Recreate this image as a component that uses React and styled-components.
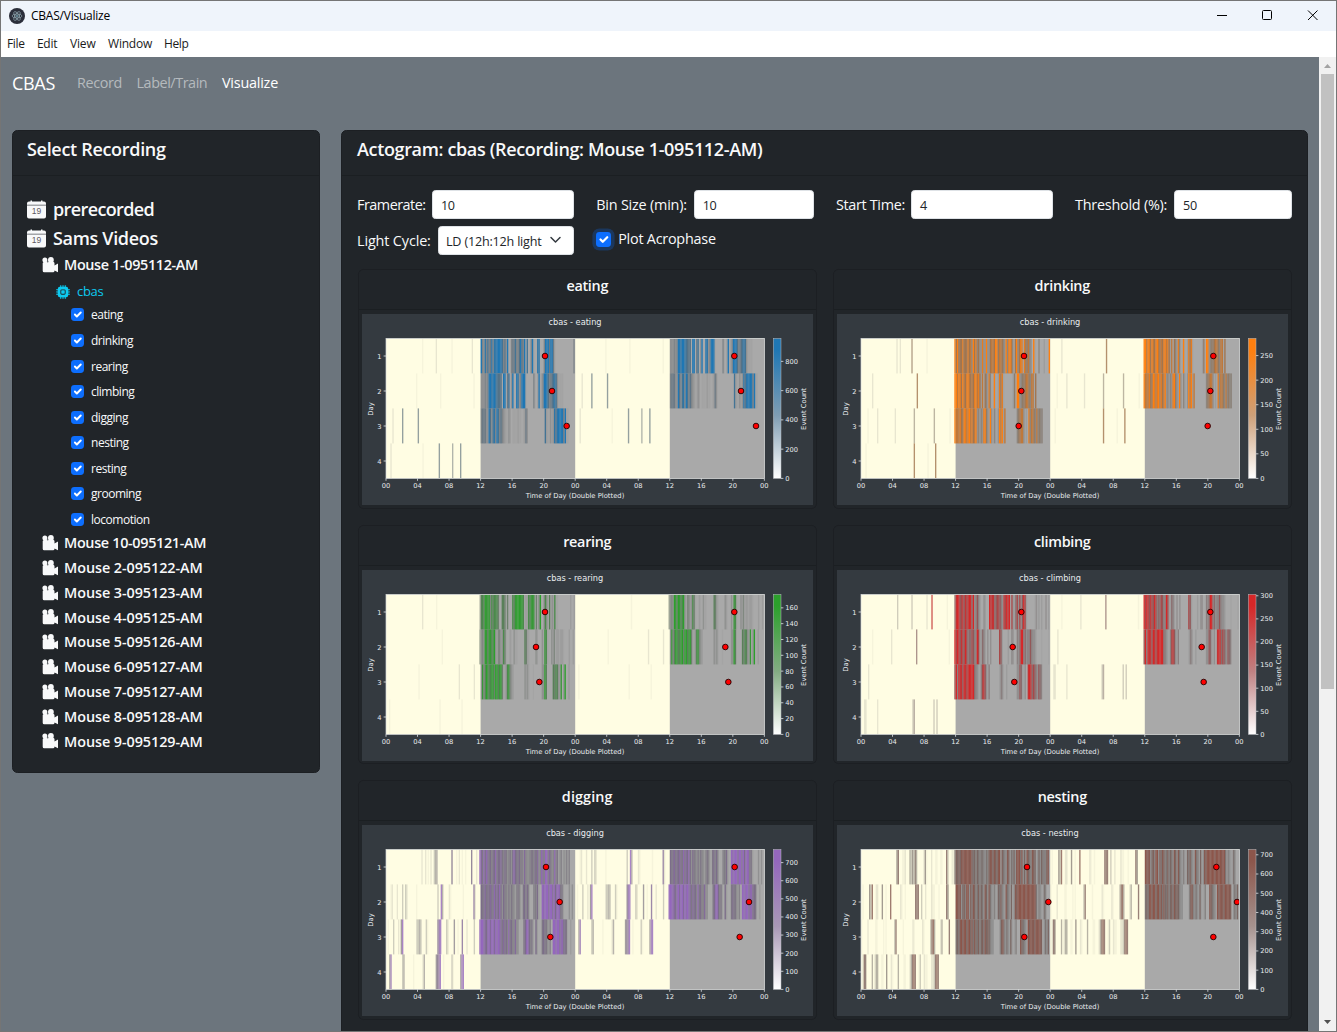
import React from "react";
import styled, { createGlobalStyle } from "styled-components";
import { BsCpuFill } from "react-icons/bs";

const Global = createGlobalStyle`
  *, *::before, *::after { box-sizing: border-box; }
  html, body { margin: 0; padding: 0; overflow: hidden; }
  body { font-family: "Open Sans", "Noto Sans", sans-serif; font-size: 14.4px; line-height: 1.5; color: #f8f9fa; }
`;

const Window = styled.div`
  width: 1337px;
  height: 1032px;
  display: flex;
  flex-direction: column;
  border: 1px solid #757575;
  background: #6c757d;
  overflow: hidden;
`;

const TitleBar = styled.header`
  flex: 0 0 30px;
  display: flex;
  align-items: center;
  background: #eff4fb;
  color: #000;
  padding-left: 8px;
`;

const Text = styled.span`
  display: inline-block;
  white-space: nowrap;
  font-size: ${(p) => p.$size || 14.4}px;
  font-weight: ${(p) => p.$weight || 400};
  letter-spacing: ${(p) => p.$track || 0}px;
`;

const WindowTitle = styled.div`
  margin-left: 6px;
  flex: 1;
  line-height: 16px;
  padding-bottom: 1px;
`;

const WindowButtons = styled.div`
  display: flex;
  padding-right: 4px;
  svg { display: block; width: 46px; height: 30px; }
`;

const MenuBar = styled.nav`
  flex: 0 0 26px;
  display: flex;
  align-items: center;
  background: #fff;
  color: #1b1b1b;
  padding: 0 0 2px 6px;
`;

const MenuItem = styled.div`
  width: ${(p) => p.$w}px;
`;

const Viewport = styled.div`
  flex: 1;
  min-height: 0;
  display: flex;
`;

const Page = styled.div`
  flex: 1;
  min-width: 0;
  overflow: hidden;
`;

const Navbar = styled.nav`
  height: 73px;
  display: flex;
  padding: 10px 0 0 11px;
`;

const NavItem = styled.div`
  width: ${(p) => p.$w}px;
  height: 32px;
  display: flex;
  align-items: center;
  color: ${(p) => (p.$active ? "#fff" : "#b5babe")};
`;

const Columns = styled.main`
  display: flex;
  align-items: flex-start;
  gap: 21px;
  padding-left: 11px;
`;

const Card = styled.section`
  width: ${(p) => p.$w}px;
  height: ${(p) => p.$h}px;
  flex: none;
  background: #212529;
  border: 1px solid #1c1f23;
  border-radius: 5.4px;
`;

const CardHeader = styled.div`
  height: 45px;
  padding: 5px 0 0 ${(p) => p.$pad || 15}px;
  border-bottom: 1px solid #1b1f22;
`;

const Tree = styled.div`
  padding: 19px 0 0 14px;
`;

const TreeRow = styled.div`
  height: ${(p) => p.$h}px;
  padding-left: ${(p) => p.$indent || 0}px;
  display: flex;
  align-items: center;
  gap: ${(p) => p.$gap || 7}px;
  color: ${(p) => p.$color || "#f8f9fa"};
  svg { flex: none; display: block; }
`;

const ModelRow = styled(TreeRow)`
  padding-top: 5px;
`;

const CheckGroup = styled.div`
  height: 228.4px;
  ${Text} { padding-top: 1px; }
`;

const Box = styled.span`
  flex: none;
  width: ${(p) => p.$s}px;
  height: ${(p) => p.$s}px;
  border-radius: 3.4px;
  background: #0d6efd;
  box-shadow: ${(p) => (p.$focus ? "0 0 0 3.6px rgba(13,110,253,.25)" : "none")};
  display: flex;
  svg { width: 100%; height: 100%; }
`;

const Controls = styled.div`
  display: grid;
  grid-template-columns: 217px 217.5px 217px 217px;
  column-gap: 22.2px;
  row-gap: 7px;
  padding: 14px 15px 0;
`;

const Field = styled.label`
  display: flex;
  align-items: center;
  justify-content: space-between;
  height: 29px;
`;

const CheckField = styled.label`
  display: flex;
  align-items: center;
  gap: 7px;
  height: 26px;
`;

const Input = styled.span`
  width: ${(p) => p.$w}px;
  height: 29px;
  padding: 3px 8px 0;
  display: flex;
  align-items: center;
  justify-content: space-between;
  background: #fff;
  border: 1px solid #dee2e6;
  border-radius: 3.6px;
  color: #212529;
`;

const Select = styled(Input)`
  padding: 3px 8px 0 7px;
  svg { margin-top: -2px; }
`;

const Charts = styled.div`
  display: grid;
  grid-template-columns: repeat(2, 459.5px);
  column-gap: 15.5px;
  row-gap: 16px;
  padding: 14px 0 0 15.5px;
`;

const ChartCard = styled.article`
  height: 239.6px;
  border: 1px solid #1c1f23;
  border-radius: 5.4px;
`;

const ChartHeader = styled.div`
  height: 40px;
  padding-top: 5px;
  text-align: center;
  border-bottom: 1px solid #1b1f22;
`;

const ChartBody = styled.div`
  padding: 4px 0 0 3.6px;
  svg { display: block; }
`;

const ScrollTrack = styled.div`
  flex: 0 0 17px;
  display: flex;
  flex-direction: column;
  align-items: center;
  justify-content: space-between;
  background: #f1f1f1;
  svg { display: block; flex: none; }
`;

const Thumb = styled.div`
  width: 13px;
  height: 615px;
  margin-bottom: auto;
  background: #c1c1c1;
`;

const Check = () => (
  <svg viewBox="0 0 20 20">
    <path fill="none" stroke="#fff" strokeLinecap="round" strokeLinejoin="round" strokeWidth="3" d="m6 10 3 3 6-6" />
  </svg>
);

const CalendarIcon = () => (
  <svg width="19" height="19" viewBox="0 0 19 19">
    <path d="M2 1.500h1.500V.5h1.500v1h9V.5h1.500v1H17a2 2 0 0 1 2 2V16.500a2 2 0 0 1-2 2H2a2 2 0 0 1-2-2V3.500a2 2 0 0 1 2-2z" fill="#f8f9fa" />
    <path d="M0 4.500h19v1.500H0z" fill="#a3a5a8" />
    <text x="9.500" y="14.400" fontSize="8.500" fontFamily="Liberation Sans, sans-serif" textAnchor="middle" fill="#5f5a62">19</text>
  </svg>
);

const CameraIcon = () => (
  <svg width="16" height="16" viewBox="0 0 16 16" fill="#f8f9fa">
    <circle cx="2.900" cy="2.900" r="2.500" />
    <circle cx="8.900" cy="2.900" r="2.900" />
    <path d="M1.800 4.800h9.200a1.500 1.500 0 0 1 1.500 1.500v2.200L16 6.500v8.700l-3.500-1.700v.3a1.500 1.500 0 0 1-1.500 1.500H2.200a1.500 1.500 0 0 1-1.500-1.500V6z" />
    <circle cx="5.700" cy="4.900" r="0.600" fill="#6d7175" />
  </svg>
);

/* Each token is "start:levels"; every digit is the level of one ten minute bin. */
const BEHAVIORS = [
  { name: "eating", rgb: [31, 119, 180], max: 957, step: 200, marks: [[570, 1138], [591, 1158], [635, 1203]], days: [
    "201:1 242:2 289:1 350:2 377:943847458488999974639004557446964907004910088000499959951 655:4",
    "183:1 255:1 355:1 377:333434998998766609905703900983499910000041029124999645678731111",
    "112:2 141:5 188:5 377:455533963784974643211320111121101253 569:7211313 597:86899995 629:911",
    "106:2 202:1 251:5 291:4 315:5"] },
  { name: "drinking", rgb: [255, 127, 14], max: 285, step: 50, marks: [[582, 1150], [574, 1141], [566, 1133]], days: [
    "199:2 209:2 244:5 289:1 373:969666866686749684633833933677699577643948974069468818657430910040002 656:9",
    "126:2 260:6 373:997986976897676897862706428401910286810 548:25 560:993455677547716",
    "112:1 141:2 194:2 251:4 311:4 358:1 373:977786698789786793424389532930420397927 560:45677312 595:84775474544",
    "106:1 251:6 292:1 315:6"] },
  { name: "rearing", rgb: [44, 160, 44], max: 177, step: 20, marks: [[570, 1138], [543, 1111], [553, 1120]], days: [
    "201:2 243:1 373:367698894767775006650500076899989712176888150490047306132711 645:2 656:2",
    "260:1 373:434398698779314423751002103110 508:6521 541:32 560:318710 588:3241221221 641:2 653:2",
    "190:1 311:2 356:2 377:384698678959968951137843 472:2 508:3231 533:1 560:3396 593:65763280390 640:2",
    "102:1 253:1 319:1"] },
  { name: "climbing", rgb: [214, 39, 40], max: 303, step: 50, marks: [[574, 1141], [548, 1115], [553, 1121]], days: [
    "201:3 244:3 289:2 304:8 350:1 373:58996786878995934642 460:32 477:988856776438798917225737369720 613:1312 633:2 646:3 654:2",
    "126:1 183:2 258:5 356:1 373:979868769745576449722542030 480:3 507:762 533:2 543:33 560:435994534464332 633:1 654:1",
    "114:2 373:694988698789999543204786314 508:243 528:2 560:3365213 593:89857643654",
    "102:22 141:2 247:34 310:3 319:3"] },
  { name: "digging", rgb: [148, 103, 189], max: 773, step: 100, marks: [[573, 1139], [614, 1182], [586, 1154]], days: [
    "199:2 210:2 218:1 226:2 236:344 289:6 303:1 311:2 320:1 330:1 348:6 363:2 373:975868756466856675465345368655645374334554657348749947534845134132424",
    "106:12 125:2 141:3 150:32 183:1 247:3 257:94 281:21 323:1 355:72 377:656756676586768636543535432454205646400044 541:462 560:98999799796898552 641:3 650:3",
    "98:1 114:3 129:2 137:59 184:3343 212:31 247:689 273:32 296:5 307:1 320:7 334:2 356:3 373:999876897997989875766485644733 505:568964520 541:62 560:5655324 593:99899788665 645:2",
    "102:48 141:34 174:1 202:24 242:5679 264:1 289:31 315:489"] },
  { name: "nesting", rgb: [140, 86, 75], max: 728, step: 100, marks: [[591, 1159], [655, 1221], [583, 1150]], days: [
    "199:57 216:112 238:435364 280:251 303:2 315:11 330:11 348:73 363:12 373:576768898998975646545543547886876892754387254638995836396548762363654478",
    "97:1 117:538 137:22 155:5 166:1 180:8 210:21 224:1 255:777 273:3 285:2 303:211 325:1 348:75 377:988836749937587457465386385324216574328542613879999998999989952432154",
    "93:1 112:2 135:11 159:1 166:1 192:37 218:1 247:21 276:21 300:3784 330:24 356:7 377:56589799689685865746758676433 509:4784353262124 570:87543 593:97988798987 641:3536",
    "97:276 125:4 133:244 153:11 168:5 182:21 203:4 220:11 238:24787 265:13 281:211 303:223787"] },
];

const MIX = [0, 0, 0, 0.04, 0.1, 0.2, 0.34, 0.55, 0.82, 1];
const ALPHA = [0, 0.08, 0.2, 0.42, 0.64, 0.84, 1, 1, 1, 1];

/* Daytime bins sit on the pale band and blend into it more softly. */
const cellStyle = (rgb, level, day) => {
  const c = rgb.map((v) => Math.round(112 + (v - 112) * MIX[level]));
  return { fill: `rgb(${c.join(",")})`, fillOpacity: ALPHA[level] * (day ? 0.8 : 1) };
};

const BIN = 1.3125;

function Stripes({ data, rgb, x, y, limit }) {
  return data.split(" ").flatMap((token) => {
    const [start, levels] = token.split(":");
    return levels.split("").map((d, i) => {
      const px = (Number(start) - 93) / 3 + i * BIN;
      if (!Number(d) || px >= limit) return null;
      return <rect key={start + "-" + i} x={x + px} y={y} width={BIN + 0.04} height={35} style={cellStyle(rgb, Number(d), px < 93)} />;
    });
  });
}

function Actogram({ item }) {
  const { name, rgb, max, step, marks, days } = item;
  const L = 24, T = 24.4, H = 140, half = 189.2;
  const color = `rgb(${rgb.join(",")})`;
  const middle = `rgb(${rgb.map((v) => Math.round(v * 0.35 + 178 * 0.65)).join(",")})`;
  const ticks = [];
  for (let v = 0; v <= max; v += step) ticks.push(v);
  const hours = ["00", "04", "08", "12", "16", "20", "00", "04", "08", "12", "16", "20", "00"];
  return (
    <svg width="451" height="191" viewBox="0 0 451 191" fontFamily="DejaVu Sans, sans-serif" fill="#e9ecef">
      <defs>
        <linearGradient id={"bar-" + name} x1="0" y1="0" x2="0" y2="1">
          <stop offset="0" stopColor={color} />
          <stop offset="0.08" stopColor={color} />
          <stop offset="0.55" stopColor={middle} />
          <stop offset="1" stopColor="#fff" />
        </linearGradient>
        <clipPath id={"plot-" + name}><rect x={L} y={T} width={378.4} height={H} /></clipPath>
      </defs>
      <rect width="451" height="191" fill="#343a40" />
      <text x="213" y="10.8" fontSize="8.2" textAnchor="middle">cbas - {name}</text>
      <rect x={L} y={T} width={378.4} height={H} fill="#fffde3" />
      <rect x={L + half / 2} y={T} width={half / 2} height={H} fill="#a9a9a9" />
      <rect x={L + half * 1.5} y={T} width={half / 2} height={H} fill="#a9a9a9" />
      <g clipPath={`url(#plot-${name})`}>
        {days.map((d, i) => (
          <g key={i}>
            <Stripes data={d} rgb={rgb} x={L} y={T + i * 35} limit={half} />
            {i > 0 && <Stripes data={d} rgb={rgb} x={L + half} y={T + (i - 1) * 35} limit={half} />}
          </g>
        ))}
        {marks.map((row, i) => row.map((m) => (
          <circle key={m} cx={(m - 21) / 3} cy={T + 17.6 + i * 35} r="2.8" fill="#f00" stroke="#200" strokeWidth="0.9" />
        )))}
      </g>
      <rect x={L} y={T} width={378.4} height={H} fill="none" stroke="#d5d7d9" strokeWidth="0.7" />
      {hours.map((h, i) => (
        <g key={i}>
          <path d={`M${L + i * 31.53} 164.4v2.4`} stroke="#dee2e6" strokeWidth="0.8" />
          <text x={L + i * 31.53} y="174" fontSize="6.7" textAnchor="middle">{h}</text>
        </g>
      ))}
      {[1, 2, 3, 4].map((d, i) => (
        <g key={d}>
          <path d={`M21.6 ${T + 17.6 + i * 35}h2.4`} stroke="#dee2e6" strokeWidth="0.8" />
          <text x="19.5" y={T + 20.1 + i * 35} fontSize="6.7" textAnchor="end">{d}</text>
        </g>
      ))}
      <text x="213" y="184.4" fontSize="6.8" textAnchor="middle">Time of Day (Double Plotted)</text>
      <text transform="translate(10.8 95) rotate(-90)" fontSize="6.8" textAnchor="middle">Day</text>
      <rect x="411.4" y={T} width="7.6" height={H} fill={`url(#bar-${name})`} stroke="#b9bcc0" strokeWidth="0.5" />
      {ticks.map((v) => {
        const y = T + H - (v / max) * H;
        return (
          <g key={v}>
            <path d={`M419 ${y}h2.4`} stroke="#dee2e6" strokeWidth="0.8" />
            <text x="423.2" y={y + 2.4} fontSize="6.7">{v}</text>
          </g>
        );
      })}
      <text transform="translate(444.3 95) rotate(-90)" fontSize="6.8" textAnchor="middle">Event Count</text>
    </svg>
  );
}

const MICE = ["10-095121", "2-095122", "3-095123", "4-095125", "5-095126", "6-095127", "7-095127", "8-095128", "9-095129"];
const CHECKS = ["eating", "drinking", "rearing", "climbing", "digging", "nesting", "resting", "grooming", "locomotion"];
const MENU = [["File", 30, -0.35], ["Edit", 33, -0.3], ["View", 38, -0.18], ["Window", 56, -0.2], ["Help", 40, -0.4]];

export default function App() {
  return (
    <Window>
      <Global />
      <TitleBar>
        <svg width="16" height="16" viewBox="0 0 16 16">
          <circle cx="8" cy="8" r="8" fill="#2b2e3a" />
          <g fill="none" stroke="#a9c4cc" strokeWidth="0.7" opacity="0.8">
            <ellipse cx="8" cy="8" rx="5" ry="2" />
            <ellipse cx="8" cy="8" rx="5" ry="2" transform="rotate(60 8 8)" />
            <ellipse cx="8" cy="8" rx="5" ry="2" transform="rotate(120 8 8)" />
          </g>
          <circle cx="8" cy="8" r="0.8" fill="#9feaf9" />
        </svg>
        <WindowTitle><Text $size={12} $track={-0.23}>CBAS/Visualize</Text></WindowTitle>
        <WindowButtons>
          <svg viewBox="0 0 46 30"><path d="M23 14.5h10" stroke="#000" /></svg>
          <svg viewBox="0 0 46 30"><rect x="22.5" y="9.5" width="9" height="9" rx="1" fill="none" stroke="#000" /></svg>
          <svg viewBox="0 0 46 30"><path d="m22 9.5 9.5 9.5m0-9.5-9.5 9.5" stroke="#000" fill="none" /></svg>
        </WindowButtons>
      </TitleBar>
      <MenuBar>
        {MENU.map(([m, w, t]) => <MenuItem key={m} $w={w}><Text $size={12} $track={t}>{m}</Text></MenuItem>)}
      </MenuBar>
      <Viewport>
        <Page>
          <Navbar>
            <NavItem $w={65} $active><Text $size={18} $track={-0.3}>CBAS</Text></NavItem>
            <NavItem $w={59.5}><Text $track={-0.37}>Record</Text></NavItem>
            <NavItem $w={85.5}><Text $track={-0.44}>Label/Train</Text></NavItem>
            <NavItem $w={80} $active><Text $track={-0.22}>Visualize</Text></NavItem>
          </Navbar>
          <Columns>
            <Card $w={308} $h={643}>
              <CardHeader $pad={14}><Text $size={18} $weight={600} $track={-0.31}>Select Recording</Text></CardHeader>
              <Tree>
                {["prerecorded", "Sams Videos"].map((n, i) => (
                  <TreeRow key={n} $h={29}>
                    <CalendarIcon />
                    <Text $size={18} $weight={600} $track={i ? -0.33 : -0.62}>{n}</Text>
                  </TreeRow>
                ))}
                <TreeRow $h={24} $indent={14.6} $gap={6.4}>
                  <CameraIcon />
                  <Text $weight={600} $track={-0.35}>Mouse 1-095112-AM</Text>
                </TreeRow>
                <ModelRow $h={25.2} $indent={29} $color="#0dcaf0">
                  <BsCpuFill size={14} />
                  <Text $size={13} $track={-0.28}>cbas</Text>
                </ModelRow>
                <CheckGroup>
                  {CHECKS.map((c) => (
                    <TreeRow key={c} $h={25.55} $indent={44}>
                      <Box $s={13}><Check /></Box>
                      <Text $size={12} $track={-0.48}>{c}</Text>
                    </TreeRow>
                  ))}
                </CheckGroup>
                {MICE.map((m, i) => (
                  <TreeRow key={m} $h={24.82} $indent={14.6} $gap={6.4}>
                    <CameraIcon />
                    <Text $weight={600} $track={i ? -0.07 : -0.33}>Mouse {m}-AM</Text>
                  </TreeRow>
                ))}
              </Tree>
            </Card>
            <Card $w={967} $h={1000}>
              <CardHeader><Text $size={18} $weight={600} $track={-0.35}>Actogram: cbas (Recording: Mouse 1-095112-AM)</Text></CardHeader>
              <Controls>
                <Field><Text $track={-0.5}>Framerate:</Text><Input $w={142}><Text $size={12.6} $track={-0.5}>10</Text></Input></Field>
                <Field><Text $track={-0.2}>Bin Size (min):</Text><Input $w={120}><Text $size={12.6} $track={-0.5}>10</Text></Input></Field>
                <Field><Text $track={-0.32}>Start Time:</Text><Input $w={142}><Text $size={12.6}>4</Text></Input></Field>
                <Field><Text $track={-0.24}>Threshold (%):</Text><Input $w={118}><Text $size={12.6} $track={-0.3}>50</Text></Input></Field>
                <Field><Text $track={-0.13}>Light Cycle:</Text>
                  <Select $w={136}>
                    <Text $size={12.6} $track={-0.2}>LD (12h:12h light</Text>
                    <svg width="16" height="12" viewBox="0 0 16 12"><path d="m2 2.500 4.500 4.500L11 2.500" fill="none" stroke="#343a40" strokeWidth="1.5" strokeLinecap="round" strokeLinejoin="round" /></svg>
                  </Select>
                </Field>
                <CheckField><Box $s={15} $focus><Check /></Box><Text $track={-0.24}>Plot Acrophase</Text></CheckField>
              </Controls>
              <Charts>
                {BEHAVIORS.map((b) => (
                  <ChartCard key={b.name}>
                    <ChartHeader><Text $weight={600} $track={b.name === "digging" ? 0.1 : -0.3}>{b.name}</Text></ChartHeader>
                    <ChartBody><Actogram item={b} /></ChartBody>
                  </ChartCard>
                ))}
              </Charts>
            </Card>
          </Columns>
        </Page>
        <ScrollTrack>
          <svg width="17" height="17" viewBox="0 0 17 17"><path d="M5 11h7L8.500 7z" fill="#a3a3a3" /></svg>
          <Thumb />
          <svg width="17" height="17" viewBox="0 0 17 17"><path d="M5 6h7L8.500 10z" fill="#505050" /></svg>
        </ScrollTrack>
      </Viewport>
    </Window>
  );
}
